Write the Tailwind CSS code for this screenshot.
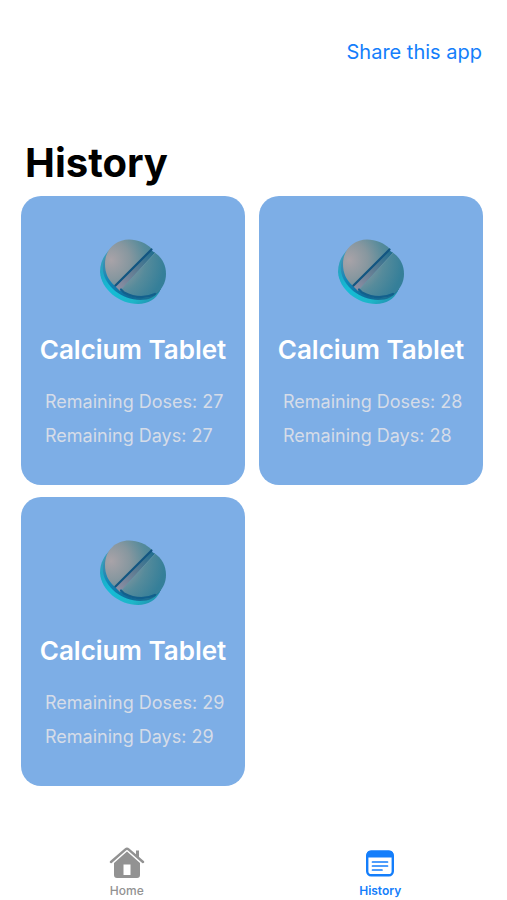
<!DOCTYPE html>
<html lang="en">
<head>
  <meta charset="UTF-8" />
  <meta name="viewport" content="width=device-width, initial-scale=1.0" />
  <title>History</title>
  <script src="https://cdn.jsdelivr.net/npm/@tailwindcss/browser@4"></script>
</head>
<body class="min-h-screen flex flex-col bg-white text-black font-['Inter',sans-serif]">

  <!-- Shared tablet drawing -->
  <svg class="absolute w-0 h-0" aria-hidden="true">
    <defs>
      <linearGradient id="rim" x1="0" y1="0" x2="1" y2="1">
        <stop offset="0" stop-color="#4d8fae" />
        <stop offset="0.25" stop-color="#1fa9c6" />
        <stop offset="0.45" stop-color="#14bcd6" />
        <stop offset="0.75" stop-color="#1db6c8" />
        <stop offset="1" stop-color="#2383a5" />
      </linearGradient>
      <linearGradient id="side" x1="0" y1="0" x2="1" y2="1">
        <stop offset="0" stop-color="#5f93ab" />
        <stop offset="0.35" stop-color="#1187b8" />
        <stop offset="0.7" stop-color="#0f6a98" />
        <stop offset="1" stop-color="#23718f" />
      </linearGradient>
      <radialGradient id="face" gradientUnits="userSpaceOnUse" cx="12" cy="21" r="54">
        <stop offset="0" stop-color="#a9a3a8" />
        <stop offset="0.35" stop-color="#87979f" />
        <stop offset="0.65" stop-color="#568b9b" />
        <stop offset="1" stop-color="#357f99" />
      </radialGradient>
      <linearGradient id="groove" gradientUnits="userSpaceOnUse" x1="18" y1="50" x2="54" y2="14">
        <stop offset="0" stop-color="#8f8fa3" />
        <stop offset="0.5" stop-color="#5f7c92" />
        <stop offset="1" stop-color="#246f8f" />
      </linearGradient>
    </defs>
    <symbol id="tablet" viewBox="0 0 68 66">
      <path d="M12 9C5 16 1 23 1 33C2 50 20 65 39 65C49 65 57 60 61 52L50 20Z" fill="url(#rim)" />
      <path d="M13 9C6 16 3 23 4 32C6 47 23 61 41 61C50 61 57 58 62 50L50 18Z" fill="url(#side)" />
      <path d="M30 0.500C39 0.500 47 4 53 10L16 47C9 41 6 34 6 25C6 10 17 0.500 30 0.500Z" fill="url(#face)" />
      <path d="M55 13C63 18 67 26 67 35C67 48 57 59 43 59C35 59 27 56 21 51Z" fill="url(#face)" />
      <path d="M52 11L16 47L21 52L56 14Z" fill="url(#groove)" />
      <path d="M52.500 10.500L16.500 46.500" fill="none" stroke="#125581" stroke-width="2.200" stroke-linecap="round" />
      <path d="M22 51L56 14" fill="none" stroke="#6494a7" stroke-width="0.800" />
      <path d="M22 50.500L25 53.500Q41 62 56 55" fill="none" stroke="#12608d" stroke-width="2.200" stroke-linecap="round" />
    </symbol>
  </svg>

  <header class="flex justify-end pt-9 pr-[25px]">
    <a href="#share" class="text-xl leading-8 text-[#147efb]">Share this app</a>
  </header>

  <main class="flex-1 pl-[21px] pr-6 pt-[71px]">
    <h1 class="pl-1 text-[40px] leading-12 font-bold">History</h1>

    <section class="mt-[9px] grid grid-cols-2 gap-x-[14px] gap-y-3">
      <article class="rounded-[20px] bg-[#7daee6] pt-[43px] pb-8">
        <svg class="mx-auto w-[68px] h-[66px]" aria-hidden="true"><use href="#tablet" /></svg>
        <h2 class="mt-[29px] text-center text-[26px] leading-8 font-semibold text-white whitespace-nowrap">Calcium Tablet</h2>
        <div class="mt-[19px] pl-6 text-lg leading-[34px] text-[#d5dce8] whitespace-nowrap">
          <p>Remaining Doses: 27</p>
          <p>Remaining Days: 27</p>
        </div>
      </article>

      <article class="rounded-[20px] bg-[#7daee6] pt-[43px] pb-8">
        <svg class="mx-auto w-[68px] h-[66px]" aria-hidden="true"><use href="#tablet" /></svg>
        <h2 class="mt-[29px] text-center text-[26px] leading-8 font-semibold text-white whitespace-nowrap">Calcium Tablet</h2>
        <div class="mt-[19px] pl-6 text-lg leading-[34px] text-[#d5dce8] whitespace-nowrap">
          <p>Remaining Doses: 28</p>
          <p>Remaining Days: 28</p>
        </div>
      </article>

      <article class="rounded-[20px] bg-[#7daee6] pt-[43px] pb-8">
        <svg class="mx-auto w-[68px] h-[66px]" aria-hidden="true"><use href="#tablet" /></svg>
        <h2 class="mt-[29px] text-center text-[26px] leading-8 font-semibold text-white whitespace-nowrap">Calcium Tablet</h2>
        <div class="mt-[19px] pl-6 text-lg leading-[34px] text-[#d5dce8] whitespace-nowrap">
          <p>Remaining Doses: 29</p>
          <p>Remaining Days: 29</p>
        </div>
      </article>
    </section>
  </main>

  <nav class="grid grid-cols-2 text-xs leading-4 font-medium">
    <a href="#home" class="flex flex-col items-center gap-1 pb-[1px] text-[#929292]">
      <svg class="w-9 h-8" viewBox="0 0 36 32" fill="none" aria-hidden="true">
        <path d="M2 15L16.500 2.300Q18 1 19.500 2.300L34 15" stroke="currentColor" stroke-width="2.400" stroke-linecap="round" stroke-linejoin="round" />
        <path d="M27 3.500H30V11L27 8.500Z" fill="currentColor" />
        <path fill-rule="evenodd" d="M18 4.500L31 16V28Q31 31 28 31H8Q5 31 5 28V16ZM14.500 17.500V28H21.500V17.500Z" fill="currentColor" />
      </svg>
      <span>Home</span>
    </a>
    <a href="#history" aria-current="page" class="flex flex-col items-center gap-1 pb-[1px] font-semibold text-[#147efb]">
      <svg class="w-9 h-8" viewBox="0 0 36 32" fill="none" stroke="currentColor" aria-hidden="true">
        <rect x="5.200" y="4.700" width="25.600" height="23.600" rx="4" stroke-width="2.400" />
        <path d="M4.500 10.500V8.500Q4.500 3.500 9 3.500H27Q31.500 3.500 31.500 8.500V10.500Z" fill="currentColor" stroke="none" />
        <path d="M10.500 15H25.500M10.500 19H25.500M10.500 23H20" stroke-width="1.700" stroke-linecap="round" />
      </svg>
      <span>History</span>
    </a>
  </nav>

</body>
</html>
